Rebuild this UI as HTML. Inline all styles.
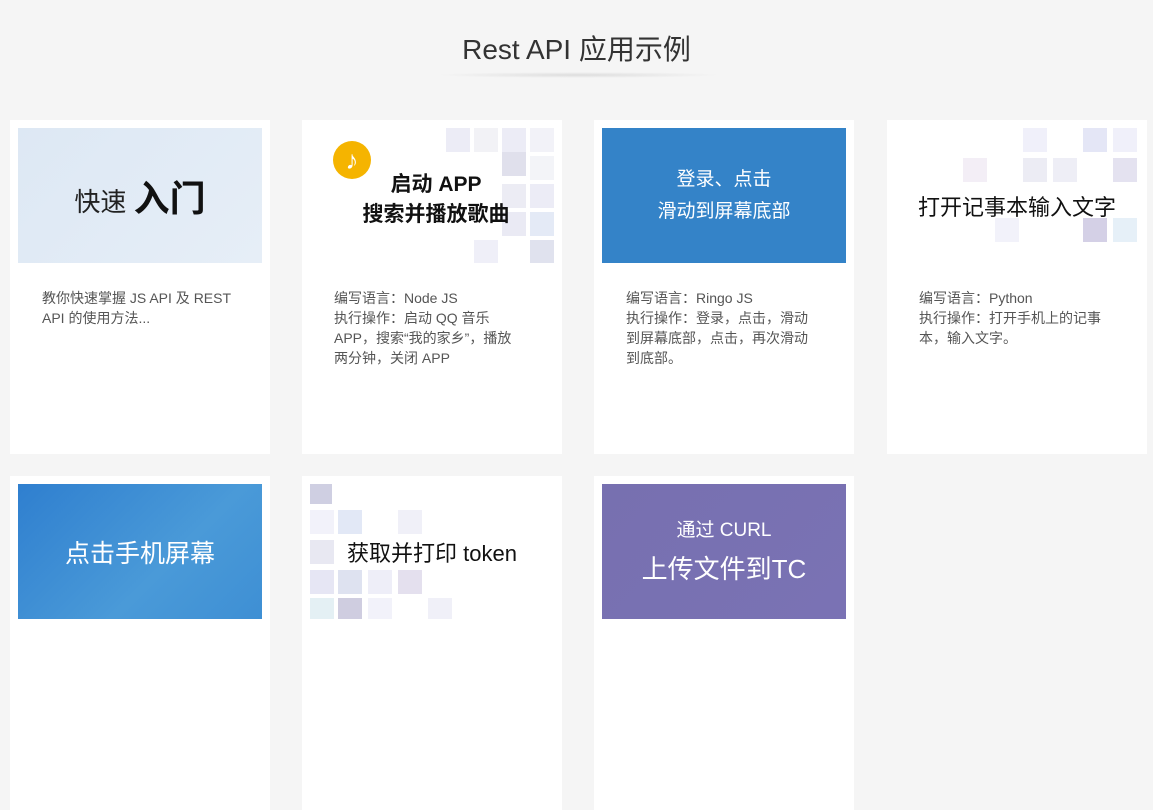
<!DOCTYPE html><html><head><meta charset="utf-8"><style>
*{margin:0;padding:0;box-sizing:border-box}
body{width:1153px;height:648px;overflow:hidden;background:#f5f5f5;font-family:"Liberation Sans","Noto Sans CJK SC",sans-serif;position:relative}
h1{position:absolute;top:28px;left:0;width:1153px;text-align:center;font-weight:400;font-size:28px;color:#333}
.line{position:absolute;top:72px;left:436px;width:285px;height:6px;background:radial-gradient(ellipse at center,#ddd 0%,rgba(245,245,245,0) 70%)}
.card{position:absolute;width:260px;height:334px;background:#fff}
.img{position:absolute;left:8px;top:8px;width:244px;height:135px;overflow:hidden;display:flex;align-items:center;justify-content:center;text-align:center}
.txt{position:absolute;left:32px;top:168px;width:188px;font-size:14px;line-height:20px;color:#555}
.sq{position:absolute;width:24px;height:24px}
</style></head><body>
<h1>Rest API 应用示例</h1><div class="line"></div>

<div class="card" style="left:10px;top:120px">
<div class="img" style="background:linear-gradient(135deg,#dde8f4,#e6eef7)"><span style="font-size:26px;color:#222">快速 <b style="font-size:36px;color:#111">入门</b></span></div>
<div class="txt" style="width:200px">教你快速掌握 JS API 及 REST API 的使用方法...</div></div>

<div class="card" style="left:302px;top:120px">
<div class="img" style="background:#fff">
<div class="sq" style="left:136px;top:0;background:#ececf6"></div><div class="sq" style="left:164px;top:0;background:#f2f2f6"></div><div class="sq" style="left:192px;top:0;background:#ececf6"></div><div class="sq" style="left:220px;top:0;background:#f2f2f8"></div>
<div class="sq" style="left:192px;top:24px;background:#e0e0ec"></div><div class="sq" style="left:220px;top:28px;background:#f3f4f8"></div>
<div class="sq" style="left:192px;top:56px;background:#ececf4"></div><div class="sq" style="left:220px;top:56px;background:#ececf6"></div>
<div class="sq" style="left:192px;top:84px;background:#eaeaf4"></div><div class="sq" style="left:220px;top:84px;background:#e4eaf6"></div>
<div class="sq" style="left:164px;top:112px;background:#efeff8"></div><div class="sq" style="left:220px;top:112px;background:#e0e2ee"></div>
<div style="position:absolute;left:23px;top:13px;width:38px;height:38px;border-radius:50%;background:#f5b400;color:#fff;font-size:26px;line-height:38px;text-align:center">♪</div>
<b style="position:relative;font-size:21px;line-height:30px;color:#111;margin-left:8px;margin-top:8px">启动 APP<br>搜索并播放歌曲</b></div>
<div class="txt">编写语言：Node JS<br>执行操作：启动 QQ 音乐 APP，搜索“我的家乡”，播放两分钟，关闭 APP</div></div>

<div class="card" style="left:594px;top:120px">
<div class="img" style="background:#3483c8"><span style="font-size:19px;line-height:32px;color:#fff">登录、点击<br>滑动到屏幕底部</span></div>
<div class="txt">编写语言：Ringo JS<br>执行操作：登录，点击，滑动到屏幕底部，点击，再次滑动到底部。</div></div>

<div class="card" style="left:887px;top:120px">
<div class="img" style="background:#fff">
<div class="sq" style="left:128px;top:0;background:#f0f0fa"></div><div class="sq" style="left:188px;top:0;background:#e4e6f6"></div><div class="sq" style="left:218px;top:0;background:#f0f0fa"></div>
<div class="sq" style="left:68px;top:30px;background:#f3eef6"></div><div class="sq" style="left:128px;top:30px;background:#ececf4"></div><div class="sq" style="left:158px;top:30px;background:#eeeef6"></div><div class="sq" style="left:218px;top:30px;background:#e4e2f0"></div>
<div class="sq" style="left:188px;top:90px;background:#d4d0e6"></div><div class="sq" style="left:218px;top:90px;background:#e6f0f8"></div><div class="sq" style="left:100px;top:90px;background:#f2f2fa"></div>
<span style="position:relative;font-size:22px;color:#111;margin-top:20px">打开记事本输入文字</span></div>
<div class="txt">编写语言：Python<br>执行操作：打开手机上的记事本，输入文字。</div></div>

<div class="card" style="left:10px;top:476px">
<div class="img" style="background:linear-gradient(135deg,#2f7fcf,#4a9ad8 60%,#3e8fd4)"><span style="font-size:25px;color:#fff">点击手机屏幕</span></div></div>

<div class="card" style="left:302px;top:476px">
<div class="img" style="background:#fff">
<div class="sq" style="left:0;top:0;height:20px;width:22px;background:#cfcfe2"></div>
<div class="sq" style="left:0;top:26px;background:#f2f2fa"></div><div class="sq" style="left:28px;top:26px;background:#e2e8f6"></div><div class="sq" style="left:88px;top:26px;background:#f0f0f8"></div>
<div class="sq" style="left:0;top:56px;background:#e8e8f2"></div>
<div class="sq" style="left:0;top:86px;background:#e6e6f4"></div><div class="sq" style="left:28px;top:86px;background:#dee2f0"></div><div class="sq" style="left:58px;top:86px;background:#eeeef8"></div><div class="sq" style="left:88px;top:86px;background:#e4e0ee"></div>
<div class="sq" style="left:0;top:114px;background:#e4f0f4"></div><div class="sq" style="left:28px;top:114px;background:#cfcde0"></div><div class="sq" style="left:58px;top:114px;background:#f2f2fa"></div><div class="sq" style="left:118px;top:114px;background:#f0f0f8"></div>
<span style="position:relative;font-size:22px;color:#111;margin-left:0">获取并打印 token</span></div></div>

<div class="card" style="left:594px;top:476px">
<div class="img" style="background:linear-gradient(135deg,#7770b0,#7a72b4)"><span style="font-size:19px;line-height:38px;color:#fff">通过 CURL<br><span style="font-size:26px">上传文件到TC</span></span></div></div>
</body></html>
